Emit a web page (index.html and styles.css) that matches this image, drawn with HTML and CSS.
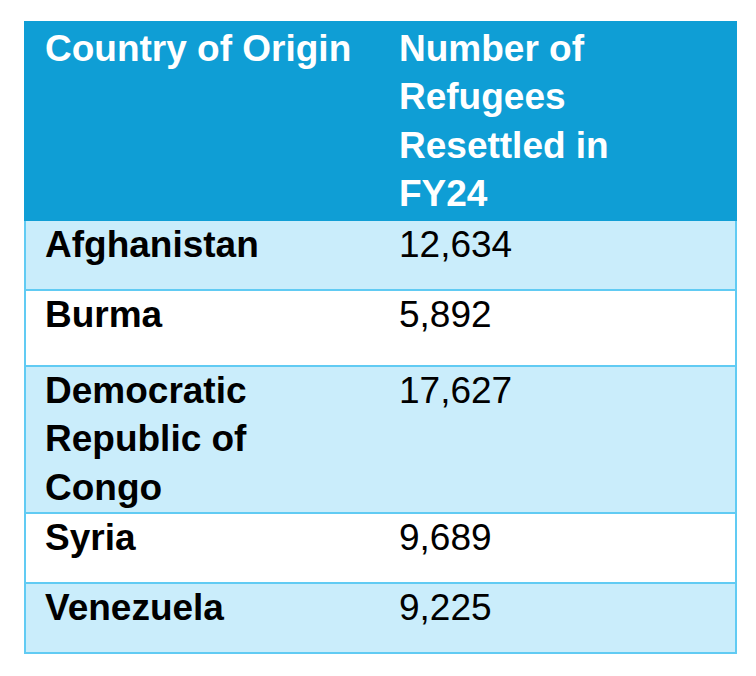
FILE: index.html
```html
<!DOCTYPE html>
<html lang="en">
<head>
<meta charset="utf-8">
<title>Refugees Resettled in FY24</title>
<link rel="stylesheet" href="styles.css">
</head>
<body>
<div class="table">
  <div class="head">
    <div class="cell c1">Country of Origin</div>
    <div class="cell c2">Number of Refugees Resettled in FY24</div>
  </div>
  <div class="row band">
    <div class="cell c1 name">Afghanistan</div>
    <div class="cell c2">12,634</div>
  </div>
  <div class="row tall">
    <div class="cell c1 name">Burma</div>
    <div class="cell c2">5,892</div>
  </div>
  <div class="row band">
    <div class="cell c1 name">Democratic Republic of Congo</div>
    <div class="cell c2">17,627</div>
  </div>
  <div class="row">
    <div class="cell c1 name">Syria</div>
    <div class="cell c2">9,689</div>
  </div>
  <div class="row band">
    <div class="cell c1 name">Venezuela</div>
    <div class="cell c2">9,225</div>
  </div>
</div>
</body>
</html>
```

FILE: styles.css
```css
html, body {
  margin: 0;
  padding: 0;
  background: #ffffff;
}
body {
  font-family: "Liberation Sans", Arial, sans-serif;
  font-size: 37px;
  line-height: 48.3px;
  color: #000000;
}
.table {
  margin: 21px 0 0 24px;
  width: 713px;
}
.head {
  display: grid;
  grid-template-columns: 356px 1fr;
  background: #0f9ed5;
  color: #ffffff;
  font-weight: bold;
  padding: 4px 0 3px 0;
  box-sizing: border-box;
  height: 200px;
}
.head .c1 {
  padding-left: 21px;
  padding-right: 20px;
}
.head .c2 {
  padding-left: 19px;
  padding-right: 37px;
}
.row {
  display: grid;
  grid-template-columns: 354px 1fr;
  border: 2px solid #61cbf3;
  border-top: none;
  box-sizing: border-box;
  min-height: 70px;
  background: #ffffff;
}
.row.band {
  background: #caedfb;
}
.row.tall {
  min-height: 76px;
}
.row .c1 {
  padding-left: 19px;
  padding-right: 20px;
}
.row .c2 {
  padding-left: 19px;
}
.name {
  font-weight: bold;
}
```
